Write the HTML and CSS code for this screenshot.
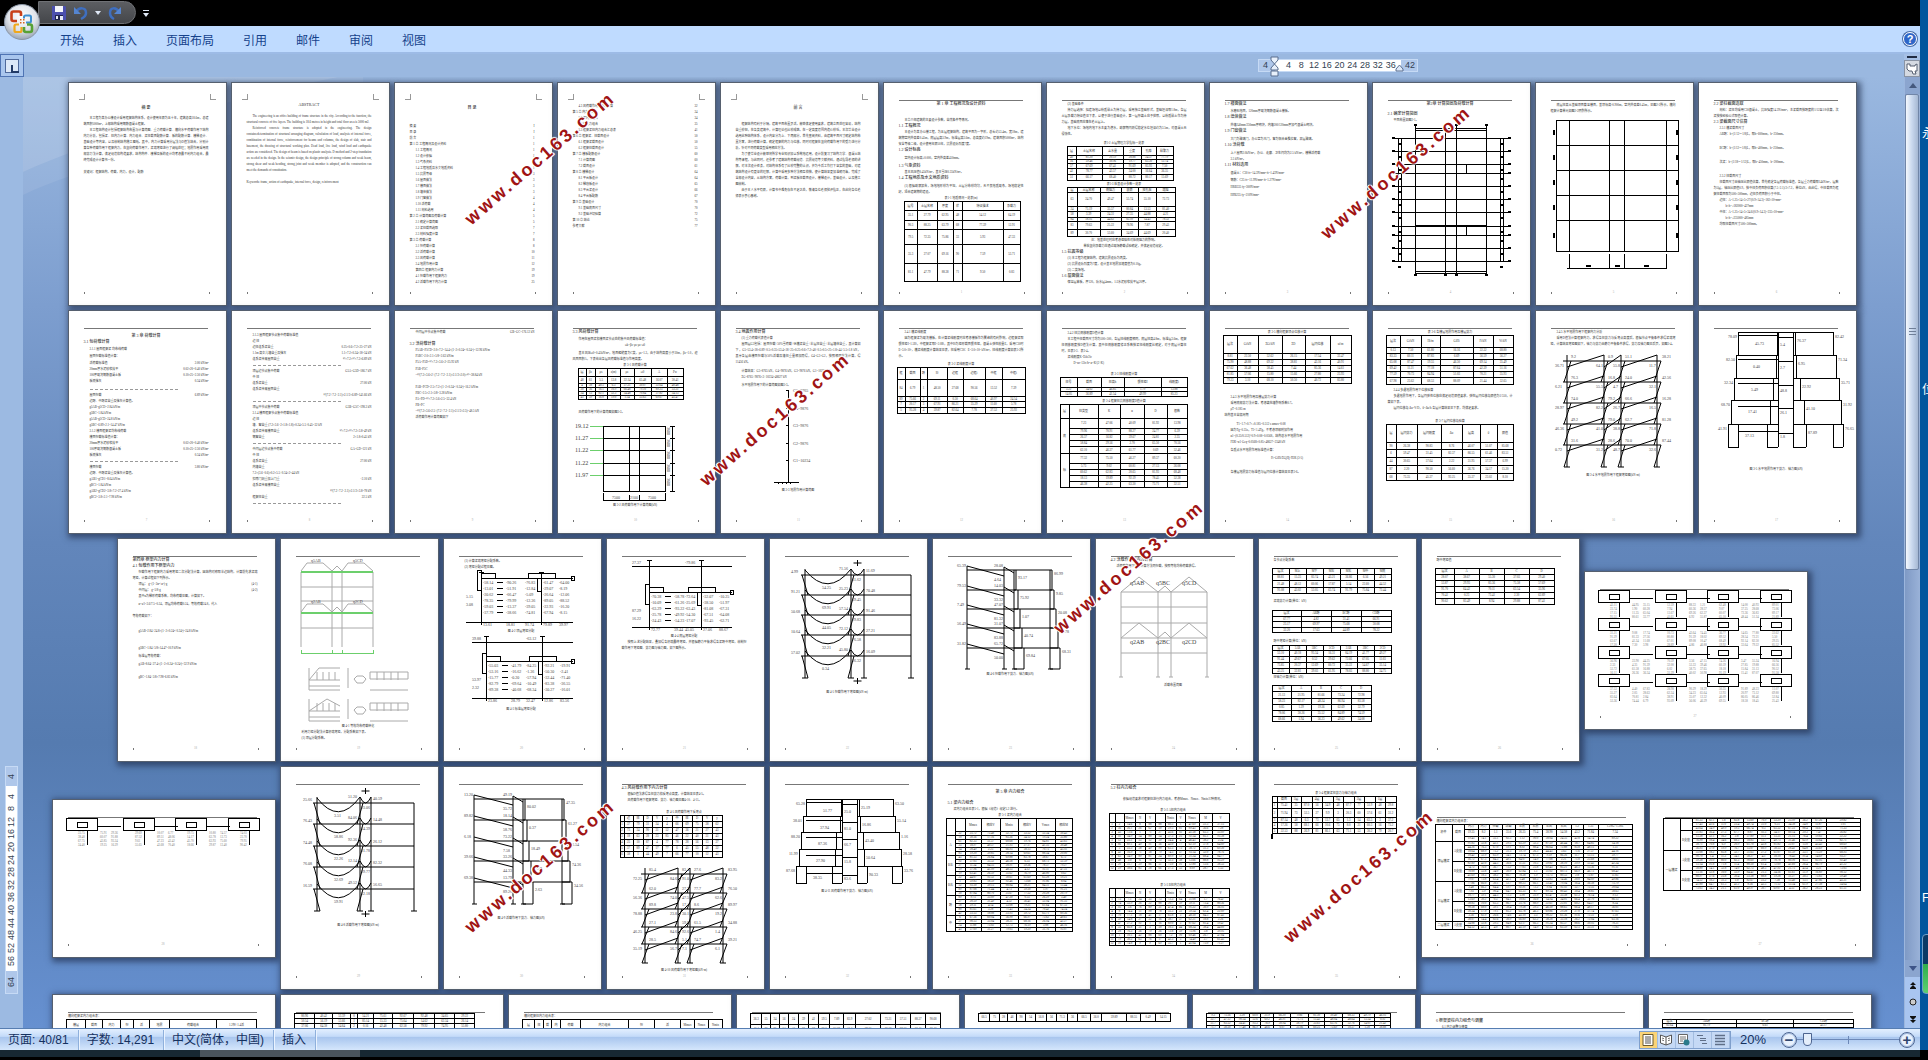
FILE: index.html
```html
<!DOCTYPE html>
<html lang="zh-CN">
<head>
    <meta charset="UTF-8">
    <meta name="viewport" content="width=device-width, initial-scale=1.0">
    <title>文档</title>
    <link rel="stylesheet" href="styles.css">
</head>
<body>
    <div class="word">
        <header class="titlebar">
            <button class="office" aria-label="Office">
                <svg viewBox="0 0 36 36" width="36" height="36">
                    <defs>
                        <radialGradient id="orb" cx="50%" cy="35%" r="65%">
                            <stop offset="0" stop-color="#fff"/>
                            <stop offset="0.6" stop-color="#dfe3ea"/>
                            <stop offset="1" stop-color="#9aa5b5"/>
                        </radialGradient>
                    </defs>
                    <circle cx="18" cy="18" r="17.5" fill="url(#orb)" stroke="#8a95a5"/>
                    <g fill="none" stroke-linejoin="round">
                        <path d="M13 17H9.500q-2 0-2-2V9.500q0-2 2-2H15q2 0 2 2V12" stroke="#c8401a" stroke-width="2.600"/>
                        <path d="M20 14.500v-1.500q0-1.500 1.500-1.500h4q1.500 0 1.500 1.500v4q0 1.500-1.500 1.500H22" stroke="#3f8fd0" stroke-width="2"/>
                        <path d="M15 20.500h-3q-1.500 0-1.500 1.500v4.500q0 1.500 1.500 1.500h4q1.500 0 1.500-1.500V23" stroke="#f0a81c" stroke-width="2.200"/>
                        <path d="M20 23v3q0 2 2 2h4q2 0 2-2v-3.500q0-2-2-2h-3" stroke="#57a135" stroke-width="2.600"/>
                    </g>
                    <path d="M16 15h1.500v1.500H16zM19 15h1.500v1.500H19zM16 18h1.500v1.500H16zM19 18h1.500v1.500H19z" fill="#d8641c"/>
                </svg>
            </button>
            <div class="quick">
                <button aria-label="保存">
                    <svg viewBox="0 0 16 16" width="16" height="16"><path d="M1 1h13l1 1v13H1z" fill="#4b4fae"/><path d="M4 1h8v6H4z" fill="#f3f5fb"/><path d="M4 10h8v5H4z" fill="#20244f"/><path d="M5 11h2v3H5zM9 11h3v4H9z" fill="#e6eaf6"/></svg>
                </button>
                <button aria-label="撤消">
                    <svg viewBox="0 0 16 16" width="16" height="16"><path d="M3 7C6 2 13 2 13 8c0 3-3 5-5 6" fill="none" stroke="#3f6fc0" stroke-width="2.500"/><path d="M1 2v7h7z" fill="#5585d0"/></svg>
                </button>
                <button class="drop" aria-label="撤消列表">
                    <svg viewBox="0 0 6 4" width="6" height="4"><path d="M0 0h6L3 4z" fill="#dfe8f5"/></svg>
                </button>
                <button aria-label="重复">
                    <svg viewBox="0 0 16 16" width="16" height="16"><path d="M12 7C9 2 3 2 3 8c0 3 2 5 4 6" fill="none" stroke="#3f6fc0" stroke-width="2.500"/><path d="M14 2v7H7z" fill="#5585d0"/></svg>
                </button>
            </div>
            <button class="more" aria-label="自定义快速访问工具栏">
                <svg viewBox="0 0 6 7" width="6" height="7"><path d="M0 0h6v1H0zM0 3h6L3 7z" fill="#dfe8f5"/></svg>
            </button>
        </header>

        <nav class="tabs">
            <a href="#">开始</a>
            <a href="#">插入</a>
            <a href="#">页面布局</a>
            <a href="#">引用</a>
            <a href="#">邮件</a>
            <a href="#">审阅</a>
            <a href="#">视图</a>
            <button class="help" aria-label="帮助">?</button>
        </nav>

        <div class="ruler-row">
            <button class="tabstop" aria-label="制表符"><span></span></button>
            <div class="ruler">
                <span class="edge">4</span>
                <span class="scale"><i>4</i><i>8</i><i>12</i><i>16</i><i>20</i><i>24</i><i>28</i><i>32</i><i>36</i></span>
                <span class="edge last">42</span>
                <svg class="mark left" viewBox="0 0 9 21" width="9" height="21"><path d="M1 1h7v3L4.500 8 1 4zM1 14v-2l3.500-4L8 12v2zM1 15h7v5H1z" fill="#e8f0fb" stroke="#5b6f8f"/></svg>
                <svg class="mark right" viewBox="0 0 9 8" width="9" height="8"><path d="M1 7V5l3.500-4L8 5v2z" fill="#dfe9f8" stroke="#5b6f8f"/></svg>
            </div>
            <div class="ruler-toggle">
                <button aria-label="标尺">
                    <svg viewBox="0 0 14 14" width="14" height="14"><path d="M2 2h3v2h5V3l2-1v7h-2l1 3H8L7 9H4L2 7z" fill="#fff" stroke="#555f70"/></svg>
                </button>
            </div>
        </div>

        <main class="work">
            <aside class="side">
                <div class="vruler">
                    <span class="edge">4</span>
                    <span class="scale"><i>4</i><i>8</i><i>12</i><i>16</i><i>20</i><i>24</i><i>28</i><i>32</i><i>36</i><i>40</i><i>44</i><i>48</i><i>52</i><i>56</i></span>
                    <span class="edge last">64</span>
                </div>
            </aside>

            <section class="canvas">
                <svg class="swoosh" viewBox="0 0 340 240" width="340" height="240">
                    <path d="M0 0H315C190 25 80 60 0 95z" fill="#fff" opacity="0.180"/>
                    <path d="M0 95C80 60 190 25 315 0H340V30C200 60 80 80 0 118z" fill="#fff" opacity="0.080"/>
                </svg>
                <div class="pages" id="pages"></div>
                <span class="stamp s1">www.doc163.com</span>
                <span class="stamp s2">www.doc163.com</span>
                <span class="stamp s3">www.doc163.com</span>
                <span class="stamp s4">www.doc163.com</span>
                <span class="stamp s5">www.doc163.com</span>
                <span class="stamp s6">www.doc163.com</span>
            </section>

            <div class="scroll">
                <button class="arrow" aria-label="向上"><svg viewBox="0 0 8 5" width="8" height="5"><path d="M0 5h8L4 0z" fill="#45597e"/></svg></button>
                <div class="track"><div class="thumb"></div></div>
                <button class="arrow" aria-label="向下"><svg viewBox="0 0 8 5" width="8" height="5"><path d="M0 0h8L4 5z" fill="#3d5488"/></svg></button>
                <div class="browse">
                    <button aria-label="前一页"><svg viewBox="0 0 6 7" width="6" height="7"><path d="M0 3h6L3 0zM0 6h6L3 3zM0 6h6v1H0z" fill="#111"/></svg></button>
                    <button aria-label="选择浏览对象"><svg viewBox="0 0 8 8" width="8" height="8"><circle cx="4" cy="4" r="3" fill="#ccc" stroke="#222"/></svg></button>
                    <button aria-label="下一页"><svg viewBox="0 0 6 7" width="6" height="7"><path d="M0 0h6v1H0zM0 1h6L3 4zM0 4h6L3 7z" fill="#111"/></svg></button>
                </div>
            </div>
        </main>

        <footer class="status">
            <span class="cell">页面: 40/81</span>
            <span class="cell">字数: 14,291</span>
            <span class="cell">中文(简体，中国)</span>
            <span class="cell">插入</span>
            <div class="views">
                <button class="on" aria-label="页面视图"><svg viewBox="0 0 12 12" width="12" height="12"><path d="M1 .500h10v11H1z" fill="#fff" stroke="#6b5a30"/><path d="M3 3h6M3 5h6M3 7h6M3 9h6" stroke="#555"/></svg></button>
                <button aria-label="阅读版式"><svg viewBox="0 0 12 12" width="12" height="12"><path d="M.500 1 6 3l5.500-2v8L6 11 .500 9zM6 3v8" fill="#fff" stroke="#555"/><path d="M2 4l2 .700M2 6l2 .700M8 4.700 10 4M8 6.700 10 6" stroke="#777"/></svg></button>
                <button aria-label="Web 版式"><svg viewBox="0 0 12 12" width="12" height="12"><path d="M.500.500h9v9h-9z" fill="#fff" stroke="#666"/><path d="M2 3h6M2 5h6M2 7h3" stroke="#777"/><circle cx="8.500" cy="8.500" r="3" fill="#2a7a8a"/></svg></button>
                <button aria-label="大纲视图"><svg viewBox="0 0 12 12" width="12" height="12"><path d="M1 1.500h6M4 4.500h6M4 6.500h6M6 9.500h5" stroke="#5f6f88"/></svg></button>
                <button aria-label="普通视图"><svg viewBox="0 0 12 12" width="12" height="12"><path d="M1 1.500h10M1 4.500h10M1 7.500h10M1 10.500h10" stroke="#5f6f88" stroke-width="1.500"/></svg></button>
            </div>
            <span class="percent">20%</span>
            <button class="round" aria-label="缩小">−</button>
            <input class="zoom" type="range" min="0" max="100" value="6" aria-label="显示比例">
            <button class="round" aria-label="放大">+</button>
        </footer>
        <div class="taskbar"><span></span></div>
    </div>

    <aside class="desktop">
        <span class="icon a">永</span>
        <span class="icon b">位</span>
        <span class="icon c">Fl</span>
        <div class="meter"></div>
    </aside>

    <script src="pages.js"></script>
</body>
</html>
```

FILE: styles.css
```css
* {
    margin: 0;
    padding: 0;
    box-sizing: border-box;
}

body {
    display: flex;
    height: 100vh;
    overflow: hidden;
    background: #000;
    font-family: "Liberation Sans", "Noto Sans CJK SC", sans-serif;
    font-size: 12px;
}

button {
    display: flex;
    align-items: center;
    justify-content: center;
    background: none;
    border: none;
    font-family: inherit;
}

.word {
    flex: 1;
    min-width: 0;
    display: flex;
    flex-direction: column;
}

/* title bar */
.titlebar {
    display: flex;
    height: 26px;
    background: #000;
}

.office {
    width: 36px;
    height: 36px;
    margin: 4px 0 0 4px;
    position: relative;
    z-index: 3;
}

.quick {
    display: flex;
    align-items: center;
    gap: 6px;
    height: 23px;
    margin: 1px 0 0 -2px;
    padding: 0 12px;
    background: linear-gradient(#5c5e62, #44464a);
    border: 1px solid #6f7175;
    border-radius: 0 12px 12px 0;
}

.quick .drop {
    width: 6px;
}

.more {
    width: 20px;
}

/* ribbon tabs */
.tabs {
    display: flex;
    align-items: center;
    gap: 29px;
    height: 28px;
    padding: 0 3px 0 60px;
    background: #bfdbff;
    border-bottom: 2px solid #9dbbe6;
}

.tabs a {
    color: #15428b;
    text-decoration: none;
}

.help {
    width: 14px;
    height: 14px;
    margin-left: auto;
    border: 1px solid #fff;
    border-radius: 50%;
    background: #2f66c8;
    box-shadow: 0 0 0 1px #4a6ea8;
    color: #fff;
    font-size: 11px;
    font-weight: bold;
}

/* horizontal ruler */
.ruler-row {
    display: flex;
    align-items: center;
    height: 23px;
    background: #9ab8e0;
}

.tabstop {
    width: 24px;
    height: 23px;
    border: 1px solid #4f74b4;
    background: #a9c6ee;
}

.tabstop span {
    width: 14px;
    height: 14px;
    padding: 5px 3px 2px 5px;
    border: 1px solid #4f6a9c;
    background: #dce8f8;
}

.tabstop span::after {
    content: "";
    display: block;
    width: 6px;
    height: 6px;
    border: solid #223a66;
    border-width: 0 0 2px 2px;
}

.ruler {
    display: flex;
    width: 160px;
    height: 13px;
    margin-left: auto;
    margin-right: 486px;
    position: relative;
    border: 1px solid #c6daf5;
    background: #afc7ea;
    color: #333f52;
    font-size: 9px;
    line-height: 11px;
}

.ruler i,
.vruler i {
    flex: 1;
    font-style: normal;
    text-align: center;
}

.ruler .edge {
    width: 16px;
    padding-left: 4px;
}

.ruler .last {
    padding-left: 4px;
}

.ruler .scale {
    display: flex;
    flex: 1;
    padding: 0 4px 0 7px;
    background: #fff;
}

.mark {
    position: absolute;
}

.mark.left {
    left: 11px;
    top: -4px;
}

.mark.right {
    left: 136px;
    top: 4px;
}

.ruler-toggle {
    width: 16px;
    height: 23px;
    padding-top: 2px;
    background: #a5c0e6;
}

.ruler-toggle::before {
    content: "";
    display: block;
    width: 10px;
    height: 2px;
    margin: 0 auto 2px;
    background: #1f2c44;
}

.ruler-toggle button {
    width: 16px;
    height: 17px;
    border: 1px solid #8a94a4;
    background: #d5dae2;
}

/* work area */
.work {
    display: flex;
    flex: 1;
    min-height: 0;
}

.side {
    display: flex;
    align-items: flex-end;
    justify-content: center;
    width: 23px;
    padding-bottom: 34px;
    background: #9cbae2;
}

.vruler {
    display: flex;
    flex-direction: row-reverse;
    width: 13px;
    height: 228px;
    border: 1px solid #c6daf5;
    background: #afc7ea;
    color: #333f52;
    font-size: 9px;
    line-height: 11px;
    writing-mode: vertical-rl;
    transform: rotate(180deg);
}

.vruler .edge {
    height: 19px;
    text-align: center;
}

.vruler .last {
    height: 22px;
}

.vruler .scale {
    display: flex;
    flex: 1;
    flex-direction: row-reverse;
    padding: 4px 0;
    background: #fff;
}

.canvas {
    flex: 1;
    min-width: 0;
    position: relative;
    overflow: hidden;
    background: linear-gradient(#9ab8e0 0%, #7d9ecf 24%, #6286bb 49%, #557bb0 70%, #6690d0 100%);
}

.swoosh {
    position: absolute;
    left: 0;
    top: 0;
}

.pages {
    display: flex;
    flex-wrap: wrap;
    justify-content: center;
    align-items: center;
    gap: 4px;
    padding: 5px 3px 0 0;
    position: relative;
}

/* one sheet at 20% */
.page {
    display: flex;
    flex-direction: column;
    width: 159px;
    height: 224px;
    overflow: hidden;
    background: #fff;
    border: 1px solid #56606f;
    box-shadow: 2px 2px 6px 2px rgba(30, 45, 75, 0.65);
    color: #333;
    font-family: "Liberation Serif", "Noto Sans CJK SC", serif;
    font-size: 3px;
    line-height: 6px;
}

.page.wide {
    width: 224px;
    height: 159px;
}

.page .top {
    flex: none;
    height: 18px;
    margin: 0 18px 0 15px;
    border-bottom: 1px solid #777;
}

.page.front .top {
    display: flex;
    justify-content: space-between;
    height: 16px;
    margin: 0 10px 2px;
    padding-top: 11px;
    border: none;
}

.page.front .top::before,
.page.front .top::after {
    content: "";
    width: 5px;
    height: 5px;
    border-bottom: 1px solid #999;
}

.page.front .top::before {
    border-right: 1px solid #999;
}

.page.front .top::after {
    border-left: 1px solid #999;
}

.page .body {
    flex: 1;
    min-height: 0;
}

.page .foot {
    flex: none;
    height: 2px;
    margin: 0 16px 11px 15px;
    border: solid #777;
    border-width: 0 1px;
    color: #aaa;
    line-height: 0;
    text-align: center;
}

.page p {
    min-height: 6px;
    margin: 0 17px 0 15px;
    white-space: nowrap;
}

.page .in {
    padding-left: 6px;
}

.page .in2 {
    padding-left: 12px;
}

.page .full {
    padding-left: 0;
    white-space: normal;
    text-align: justify;
}

.page .full.in {
    text-indent: 6px;
}

.page .sec {
    font-size: 4px;
    font-weight: 500;
}

.page .title,
.page .cap {
    text-align: center;
}

.page .title {
    font-size: 4px;
    font-weight: 500;
}

.page .pair {
    display: flex;
    justify-content: space-between;
}

.page .rule {
    height: 4px;
    min-height: 0;
    margin: 0 48px 2px 21px;
    padding: 0;
    border-bottom: 1px dashed #999;
}

.page svg {
    display: block;
    overflow: visible;
    fill: none;
    stroke: #000;
    shape-rendering: crispEdges;
}

.page svg text {
    fill: #444;
    stroke: none;
    font-family: "Liberation Serif", serif;
    font-size: 4px;
}

.page svg .big {
    font-size: 6px;
}

.page svg .tiny {
    fill: #777;
    font-size: 3px;
}

.page svg .gray {
    stroke: #aaa;
}

.page svg .green {
    stroke: #6ccf6c;
}

.page svg .bold {
    stroke-width: 2;
}

.page svg .smooth {
    shape-rendering: auto;
}

.page table {
    table-layout: fixed;
    border-collapse: collapse;
    margin-left: 13px;
    font-size: 3px;
    line-height: 3px;
}

.page.indent table {
    margin-left: 20px;
}

.page td {
    border: 1px solid #000;
    text-align: center;
    white-space: nowrap;
}

/* watermark across the sheets */
.stamp {
    position: absolute;
    padding: 0 4px;
    color: #a01414;
    font-size: 18px;
    font-weight: bold;
    letter-spacing: 3px;
    line-height: 20px;
    text-shadow: 1px 0 1px #fff, -1px 0 1px #fff, 0 1px 1px #fff, 0 -1px 1px #fff, 1px 1px 0 #fff, -1px -1px 0 #fff;
    transform: translate(-50%, -50%) rotate(-41deg);
}

.s1 { left: 27.5%; top: 8.5%; }
.s2 { left: 73%; top: 10%; }
.s3 { left: 40%; top: 36%; }
.s4 { left: 58.8%; top: 51.5%; }
.s5 { left: 27.5%; top: 83%; }
.s6 { left: 71%; top: 84%; }

/* scroll bar */
.scroll {
    display: flex;
    flex-direction: column;
    width: 16px;
    background: #8ba5cf;
    border-left: 1px solid #9cb6dd;
}

.arrow {
    height: 17px;
}

.track {
    flex: 1;
    background: linear-gradient(90deg, #7f9ac5, #9ab2d8);
}

.thumb {
    width: 14px;
    height: 55%;
    border: 1px solid #7186a8;
    border-radius: 2px;
    background:
        repeating-linear-gradient(#6f7f98 0 1px, transparent 1px 3px) center / 7px 9px no-repeat,
        linear-gradient(90deg, #f4f8fd, #c9d8ee 50%, #a6b8d3);
}

.browse {
    display: flex;
    flex-direction: column;
    justify-content: space-around;
    height: 51px;
    background: #a9c5f0;
}

/* status bar */
.status {
    display: flex;
    align-items: center;
    height: 22px;
    border-top: 1px solid #567db1;
    background: linear-gradient(#e3efff 0%, #c4dbf9 35%, #a9c6ee 40%, #d5e6fc 100%);
    color: #15315f;
}

.cell {
    padding: 0 9px 0 8px;
    border-right: 1px solid #8fb0dc;
    box-shadow: 1px 0 0 #eaf3ff;
    line-height: 20px;
}

.views {
    display: flex;
    margin-left: auto;
    border: 1px solid #7f9fcc;
    background: #c5d9f5;
}

.views button {
    width: 18px;
    height: 16px;
    border-right: 1px solid #a3bde0;
}

.views .on {
    background: #fbd477;
}

.percent {
    padding: 0 15px 0 9px;
    font-size: 13px;
}

.round {
    width: 16px;
    height: 16px;
    border: 1px solid #4d6591;
    border-radius: 50%;
    background: #e8f1fd;
    box-shadow: inset 0 0 0 1px #a5bde0;
    color: #31466e;
    font-size: 15px;
    font-weight: bold;
    line-height: 14px;
}

.round:last-child {
    margin-right: 5px;
}

.zoom {
    width: 102px;
    height: 14px;
    appearance: none;
    background:
        linear-gradient(#6c88b8, #6c88b8) center / 1px 8px no-repeat,
        linear-gradient(#6c88b8, #6c88b8) center / 100% 1px no-repeat;
}

.zoom::-webkit-slider-thumb {
    appearance: none;
    width: 9px;
    height: 13px;
    border: 1px solid #4d6591;
    border-radius: 1px 1px 5px 5px;
    background: #e4eefb;
}

.taskbar {
    height: 10px;
    padding-left: 200px;
    background: #172833;
    border-bottom: 3px solid #000;
}

.taskbar span {
    display: block;
    width: 160px;
    height: 7px;
    background: #4a545d;
}

/* strip of desktop beside the window */
.desktop {
    width: 8px;
    margin-bottom: 10px;
    position: relative;
    overflow: hidden;
    background: #01559d;
    color: #fff;
}

.icon {
    position: absolute;
    left: 2px;
}

.icon.a { top: 124px; }
.icon.b { top: 380px; }
.icon.c { top: 891px; }

.meter {
    position: absolute;
    left: 2px;
    top: 934px;
    width: 20px;
    height: 60px;
    border: 1px solid #6f9fc8;
    border-radius: 4px;
    background: linear-gradient(#0a3a66 50%, #2fae4c 50%, #5cd070);
}
```

FILE: pages.js
```javascript
// Sheet contents. A string is one text line, a number is a gap in pixels.
// Line marks: '# ' title, '= ' section, '^ ' caption, '> ' paragraph,
// '| ' goes on with the paragraph above, '. ' indented, '; ' double indent, '--' dashed rule.
// A tab inside a line pushes the rest to the right edge.
const marks = {
    '#': 'title', '=': 'sec', '^': 'cap', '>': 'full in', '|': 'full', '.': 'in', ';': 'in2'
};

let seed = 3;
function num(digits = 2) {
    seed = (seed * 7919 + 13) % 10007;
    return (seed / 107).toFixed(digits);
}

function line(s) {
    if (s === '') return '<p></p>';
    if (s === '--') return '<p class="rule"></p>';
    const cls = marks[s[0]] && s[1] === ' ' ? marks[s[0]] : '';
    const text = cls ? s.slice(2) : s;
    if (text.includes('\t')) {
        return `<p class="pair ${cls}">` + text.split('\t').map(t => `<span>${t}</span>`).join('') + '</p>';
    }
    return `<p class="${cls}">${text}</p>`;
}

// glue '| ' lines to the paragraph before them
function join(body) {
    return body.reduce((out, b) => {
        const last = out[out.length - 1];
        if (typeof b === 'string' && b.startsWith('| ') && typeof last === 'string' && /^[>|] /.test(last)) {
            out[out.length - 1] = last + (/[a-z,.]$/.test(last) ? ' ' : '') + b.slice(2);
        } else {
            out.push(b);
        }
        return out;
    }, []);
}

// cols and rows are sizes in pixels, head holds the first row,
// lead lists the row spans of the left columns
function table(cols, rows, head = [], lead = []) {
    const width = cols.reduce((a, b) => a + b, 0);
    const starts = lead.map(spans => {
        const map = {};
        let at = 0;
        spans.forEach(([n, label]) => { map[at] = [n, label]; at += n; });
        return map;
    });
    let html = `<table style="width:${width}px"><colgroup>`;
    cols.forEach(c => { html += `<col style="width:${c}px">`; });
    html += '</colgroup><tbody>';
    rows.forEach((h, r) => {
        html += `<tr style="height:${h}px">`;
        cols.forEach((c, i) => {
            if (i < starts.length) {
                const s = starts[i][r];
                if (s) html += `<td rowspan="${s[0]}">${s[1]}</td>`;
                return;
            }
            const text = r === 0 && head[i] !== undefined ? head[i] : c < 8 ? r : num(c < 11 ? 0 : c < 14 ? 1 : 2);
            html += `<td>${text}</td>`;
        });
        html += '</tr>';
    });
    return html + '</tbody></table>';
}

function fig(h, inner) {
    return `<svg viewBox="0 0 157 ${h}" width="157" height="${h}">${inner}</svg>`;
}

const path = (d, cls = '') => `<path class="${cls}" d="${d}"/>`;
const label = (x, y, t, cls = '') => `<text class="${cls}" x="${x}" y="${y}">${t}</text>`;
const rep = (n, v) => Array(n).fill(v);

// moment diagram under horizontal load
function sway(xs, ys, bottom) {
    let d = '', t = '';
    const right = xs[3];
    xs.forEach(x => { d += `M${x} ${ys[0] - 6}V${bottom}M${x - 3} ${bottom}h6`; });
    ys.forEach((y, k) => {
        const next = ys[k + 1] || bottom;
        d += `M${xs[0] - 4} ${y}H${right + 4}`;
        for (let i = 0; i < 3; i++) {
            d += `M${xs[i]} ${y + 6}L${xs[i + 1]} ${y - 6}`;
            t += label(xs[i] + 4, y - 3, num(1)) + label(xs[i + 1] - 8, y + 6, num(1));
        }
        xs.forEach(x => { d += `M${x + 4} ${y}L${x - 3} ${next}`; });
        t += label(xs[0] - 12, y + 6, num()) + label(right + 5, y - 3, num());
    });
    return path(d, 'smooth') + t;
}

// moment diagram under vertical load
function sag(xs, ys, bottom) {
    let d = '', t = '';
    xs.forEach(x => { d += `M${x} ${ys[0] - (x === xs[3] ? 0 : 6)}V${bottom}M${x - 3} ${bottom}h6`; });
    ys.forEach((y, k) => {
        const next = ys[k + 1] || bottom;
        d += `M${xs[0] - 4} ${y}H${xs[3]}`;
        d += `M${xs[0]} ${y - 5}Q${(xs[0] + xs[1]) / 2} ${y + 23} ${xs[1]} ${y - 6}`;
        d += `M${xs[1]} ${y - 6}Q${(xs[1] + xs[2]) / 2} ${y + 6} ${xs[2]} ${y - 6}`;
        d += `M${xs[0] - 3} ${y}L${xs[0] + 3} ${next}M${xs[1] + 3} ${y}L${xs[1] - 3} ${next}`;
        t += label(xs[0] - 14, y - 2, num()) + label(xs[0] + 17, y + 14, num()) + label(xs[1] - 12, y - 5, num());
        t += label(xs[1] + 1, y + 6, num()) + label(xs[2] + 2, y - 3, num());
    });
    const mid = (xs[1] + xs[2]) / 2;
    d += `M${mid - 4} ${ys[0] - 12}h8M${mid} ${ys[0] - 15}v6M${mid - 4} ${bottom + 3}h8M${mid} ${bottom}v6`;
    return path(d, 'smooth') + t;
}

// shear and axial force diagram under vertical load
function shear(x0, x1, x2, x3, ys, bottom) {
    let d = `M${x0} ${ys[0] - 4}V${bottom}M${x1} ${ys[0] - 3}V${bottom}M${x2} ${ys[0]}V${bottom}M${x3} ${ys[0]}V${bottom}`;
    let t = '';
    [x0, x1, x2, x3].forEach(x => { d += `M${x - 2} ${bottom}h5`; });
    ys.forEach((y, k) => {
        const next = ys[k + 1] || bottom, a = 2 + k * 2;
        d += `M${x0} ${y}H${x3 + a}V${next}M${x2 + a} ${y}V${next}M${x2} ${next}h${a}M${x3} ${next}h${a}`;
        d += `M${x0} ${y - 4}L${x1} ${y + 6}M${x1} ${y - 3}L${x2} ${y + 3}`;
        t += label(x0 - 10, y - 3, num()) + label(x1 - 10, y + 11, num()) + label(x1 - 10, y - 3, num());
        t += label(x2 + a + 2, y + 9, num()) + label(x3 + a + 2, y + 5, num());
    });
    return path(d, 'smooth') + t;
}

// stepped axial force diagram
function steps(ys, outer, inner, mid) {
    let d = `M${mid[0]} ${ys[0]}V${ys[5]}M${mid[1]} ${ys[0]}V${ys[5]}M${outer[0][0]} ${ys[0]}H${outer[0][1]}`;
    let t = '';
    for (let k = 0; k < 5; k++) {
        const [l, r] = outer[k], [a, b] = inner[k], y = ys[k], e = ys[k + 1];
        d += `M${l} ${y}V${e}M${r} ${y}V${e}M${a} ${y}V${e}M${b} ${y}V${e}M${l} ${y}H${mid[0]}M${mid[1]} ${y}H${r}`;
        d += `M${outer[0][0]} ${y + 3 + k}H${mid[0]}M${mid[0]} ${y + 5 + k}H${mid[1]}`;
        t += label(l - 10, y + 6, num()) + label(l + 17, y + 13, num()) + label(mid[0] + 2, y + 14, num(1));
        t += label(b + 2, y + 10, num()) + label(r + 2, y + 6, num());
    }
    const e = ys[5], l = outer[4][0], r = outer[4][1];
    d += `M${l} ${e}h10V${ys[4]}M${r} ${e}h-10V${ys[4]}M${inner[4][0]} ${e}H${mid[0]}M${mid[1]} ${e}H${inner[4][1]}`;
    return path(d) + t;
}

// moment distribution sheet
function spread(x1, x2, left, right, top, beam, bottom) {
    let d = `M${x1} ${top}V${bottom + 3}M${x2} ${top}V${bottom + 3}M${x1} ${beam}H${right}M${left} ${bottom}H${right}`;
    d += `M${x1 - 2} ${top}h5M${x2 - 2} ${top}h5M${x1} ${beam - 5}h14v5M${x2 - 13} ${beam}v-5h27v5`;
    d += `M${x1 - 4} ${beam - 8}h4v20h-4zM${x2 - 4} ${beam}h4v13h-4zM${right - 2} ${beam - 2}h3v4h-3z`;
    let t = '';
    const cols = [x1 + 2, x1 + 25, x2 - 16, x2 + 2, x2 + 18];
    for (let y = beam + 6; y < bottom - 2; y += 6) {
        cols.forEach(x => { t += label(x, y, '-' + num()); });
        d += `M${x1 + 16} ${y - 2}h6`;
    }
    [beam + 20, beam + 28].forEach(y => { t += label(left, y, num()); });
    cols.forEach(x => { t += label(x, bottom + 4, num()); });
    if (beam - top > 15) {
        d += `M${left} ${top + 6}H${right}`;
        t += label(left, top + 4, num()) + label(x2 - 16, top + 4, '-' + num());
    }
    return path(d) + t;
}

// row of joint boxes on the wide sheets
function joints(y) {
    let d = '', t = '';
    [13, 70, 122, 175].forEach((x, i) => {
        d += `M${x} ${y}h31v12h-31zM${x + 11} ${y + 4}h10v5h-10zM${x + 21} ${y + 12}v15`;
        if (i < 3) d += `M${x + 31} ${y + 8}h24`;
        for (let k = 0; k < 4; k++) {
            [12, 34, 45].forEach(o => { if (x + o < 205) t += label(x + o, y + 16 + k * 4, num(), 'tiny'); });
        }
    });
    return path(d) + t;
}

function plan() {
    let d = 'M42 0V152M72 0V152M83 0V152M113 0V152M25 14V137M28 14V137M127 14V137M130 14V137M42 4H113M42 6H113M42 147H113M42 149H113M93 40v9M93 102v9';
    let dots = '';
    [14, 27, 40, 49, 62, 75, 88, 102, 111, 124, 137].forEach(y => {
        d += `M20 ${y}H136`;
        dots += `M19 ${y}h3M135 ${y}h3M25 ${y + 6}h3M127 ${y + 6}h3`;
    });
    [42, 72, 83, 113].forEach(x => { dots += `M${x - 1} 1h3M${x - 1} 151h3`; });
    return path(d) + path(dots + 'M42 102H113', 'bold');
}

function slab() {
    let d = 'M20 0H142V131H20zM33 0V131M73 0V131M88 0V131M130 0V131M33 134v14M73 134v14M88 134v14M130 134v14M31 148H131';
    [25, 50, 75, 100].forEach(y => { d += `M20 ${y}H142`; });
    return path(d) + path('M18 10v5M18 35v5M18 60v5M18 85v5M18 113v5M141 10v5M141 35v5M141 60v5M141 85v5M141 113v5M50 146h5M79 146h5M108 146h5', 'bold');
}

function load() {
    const d = 'M45 2H107V67H45zM71 2V67M81 2V67M45 14H107M45 26H107M45 39H107M45 51H107M45 69v7H107v-7M71 71v5M81 71v5M114 2V67M112 2h5M112 14h5M112 26h5M112 39h5M112 51h5M112 67h5';
    let g = '', t = '';
    ['19.12', '11.27', '11.22', '11.22', '11.97'].forEach((v, i) => {
        const y = [2, 14, 26, 39, 51][i];
        g += `M32 ${y}H45`;
        t += label(17, y + 2, v, 'big');
    });
    [3, 15, 27, 40, 54].forEach(y => { t += `<text transform="translate(109 ${y}) rotate(90)">3600</text>`; });
    return path(d) + path(g, 'green') + t + label(54, 75, '7500') + label(72, 75, '2100') + label(90, 75, '7500');
}

function loads() {
    let d = 'M20 11V86M51 11V86M61 11V86M92 11V86M20 26H92M20 40H92M20 67H92';
    d += 'M20 10l6-8h16l9 8M51 10l5-5 5 5 6-8h16l9 8M20 51l6-8h16l9 8M51 51l5-5 5 5 6-8h16l9 8';
    [107, 138].forEach((y, i) => {
        d += `M28 ${y + 12}h31M28 ${y + 18}h31M28 ${y}v22M28 ${y + 22}h31M67 ${y}v20M89 ${y + 4}h38v7h-38zM89 ${y + 22}h38M73 ${y + 11}l3-3h6l3 3-3 4h-6z`;
        d += i ? `M28 ${y + 12}l18-12 13 7` : `M28 ${y + 12}l10-12h21`;
        [36, 42, 48, 54, 96, 103, 110, 117].forEach(x => { d += `M${x} ${y + 4}v8`; });
    });
    const beams = path('M20 11H92M20 52H92', 'green bold') + path('M20 92H92M20 89v4M51 89v4M61 89v4M92 89v4', 'green');
    return path(d, 'gray smooth') + beams + label(30, 1, 'q5AB') + label(72, 1, 'q5CD') + label(30, 42, 'q2AB') + label(72, 42, 'q2CD');
}

function roofLoads() {
    let d = '';
    [25, 62, 75, 111].forEach(x => { d += `M${x} 16V101M${x - 2} 101h4`; });
    [16, 31, 47, 62, 77].forEach(y => { d += `M25 ${y}H111`; });
    [16, 62].forEach(y => { d += `M25 ${y}l18-15 19 15 7-6 6 6 18-15 18 15`; });
    return path(d, 'gray smooth') + label(34, 9, 'q5AB', 'big') + label(60, 9, 'q5BC', 'big') + label(86, 9, 'q5CD', 'big')
        + label(34, 68, 'q2AB', 'big') + label(60, 68, 'q2BC', 'big') + label(86, 68, 'q2CD', 'big');
}

const calc = ['. 活荷载标准值\t2.00 kN/m²', '. 20mm厚水泥砂浆找平\t0.02×20=0.40 kN/m²', '. 100厚现浇钢筋混凝土板\t0.10×25=2.50 kN/m²', '. 板底抹灰\t0.34 kN/m²'];
const wideCols = [17, 12, 14, 11, 13, 13, 14, 13, 14, 15, 12, 15, 34];
const wideHead = ['层次', '截面', '内力', '内力', '恒载', '活载', '左震', '右震', '左风', '右风', '1.2', '1.35', '1.2SG+1.3SE'];

const pages = [
    { front: 1, body: [4, '# 摘  要', 4,
        '> 本工程为某办公楼设计采用框架结构体系，设计使用年限为五十年，建筑总高18.6m，总建筑面积5000m²，',
        '| 上部结构采用钢筋混凝土框架。',
        '> 本工程结构设计包括框架结构布置与计算简图、重力荷载计算、横向水平荷载作用下结构内力分析，',
        '| 包括梁、柱内力计算、内力组合、梁柱截面配筋计算、板的配筋计算、楼梯设计、基础设计等内容，以及',
        '| 绘制结构施工图纸。其中，内力计算采用分层法与D值法结合，分别计算各种荷载作用下框架内力，',
        '| 在竖向荷载作用下，梁端弯矩进行了调幅处理；地震作用采用底部剪力法计算，满足规范和构造要求，',
        '| 结构构件、楼梯及板的设计均考虑最不利内力组合，最终完成设计计算书一份。', '', '关键词：框架结构，荷载，内力，设计，配筋'] },
    { front: 1, body: [1, '# ABSTRACT', 5,
        '> The engineering is an office building of frame structure in the city. According to the function,',
        '| the structural concrete of five layers. The building is 18.6 metres in height and total floor area',
        '| is 5000 m2.',
        '> Reinforced concrete frame structure is adopted in the engineering. The design contains:',
        '| determination of structural arranging diagram, calculation of load, analysis of internal force,',
        '| combination of internal force, reinforcement for beams and columns, the design of',
        '| slab, stair and basement, the drawing of structural working plan. Dead load, live load, wind load',
        '| and earthquake action are considered. The design of beam is based on plastic analysis. D method',
        '| and 2-step foundation are needed in the design. In the seismic design, the design principle of',
        '| strong column and weak beam, strong shear and weak bending, strong joint and weak member is',
        '| adopted, and the construction can meet the demands of constitution.', '',
        'Keywords: frame, action of earthquake, internal force, design, reinforcement'] },
    { front: 1, body: [4, '# 目  录', 12, '摘  要\tI', '目  录\tI', '前  言\t1', '第 1 章  工程概况及设计资料\t1', '. 1.1 工程概况\t1', '. 1.2 设计依据\t1', '. 1.3 气象资料\t1',
        '. 1.4 工程地质及水文地质资料\t1', '. 1.5 抗震等级\t3', '. 1.6 屋面做法\t3', '. 1.7 楼面做法\t3', '. 1.8 墙体做法\t3', '. 1.9 门窗做法\t4', '. 1.10 活荷载\t4', '. 1.11 材料选用\t4',
        '第 2 章  计算简图及荷载计算\t5', '. 2.1 确定计算简图\t5', '. 2.2 梁柱截面选取\t7', '. 2.3 材料强度计算\t7', '第 3 章  荷载计算\t8', '. 3.1 恒荷载计算\t8', '. 3.2 活荷载计算\t10', '. 3.3 风荷载计算\t11', '. 3.4 地震作用计算\t12',
        '. 第四章 框架内力计算\t19', '. 4.1 恒载作用下框架内力\t19', '. 4.2 活载作用下内力计算\t25'] },
    { front: 1, body: [2, '. 4.3 风荷载作用下内力计算\t32', '第 5 章  内力组合\t34', '. 5.1 梁内力组合\t34', '. 5.2 柱内力组合\t35', '. 5.3 框架梁柱内力组合汇总表\t41', '第 6 章  框架梁、柱截面设计\t50', '. 6.1 框架梁截面设计\t50', '. 6.2 框架柱截面设计\t55', '第 7 章  楼板配筋设计\t60', '. 7.1 计算简图\t60', '. 7.2 截面设计\t61', '第 8 章  楼梯设计\t64', '. 8.1 平台板设计\t64', '. 8.2 梯段板设计\t65', '. 8.3 平台梁设计\t66', '. 8.4 平台板配筋\t67', '第 9 章  基础设计\t70', '. 9.1 基础底面尺寸\t70', '. 9.2 基础冲切验算\t72', '第 10 章  结论\t75', '参考文献\t77'] },
    { front: 1, body: [4, '# 前  言', 10,
        '> 框架结构有利于分隔，建筑平面布置灵活，能够满足使用要求，建筑立面处理容易，结构自重较轻，',
        '| 在各类建筑中，计算理论也比较成熟，在一定高度范围内造价较低，本次毕业设计选用此种结构体系，',
        '| 设计内容分为上、下两部分，首先查阅资料，由建筑平面尺寸确定结构布置方案，进行荷载计算，确',
        '| 定框架的内力与位移，同时对框架在竖向荷载作用下的受力进行分析，针对不同荷载类型采用相应方法。',
        '> 为了使毕业设计能够将所学专业知识加以系统地运用，设计前复习了结构力学、混凝土结构等课程，',
        '| 与此同时，还参考了建筑结构荷载规范、抗震规范等文献资料，通过指导老师的讲解，对本次设计任',
        '| 务，对结构体系有了比较完整的认识，并为今后工作打下坚实的基础，对建筑结构设计有更深的理解，',
        '| 计算中采用多种方法相互校核，使计算结果更加准确可靠，完成了全部设计内容，从结构方案，荷载计算，到梁板柱截面设计，楼梯设计，基础设计，以及施工图绘制。',
        '> 由于本人水平有限，计算书中难免存在不足之处，敬请各位老师批评指正，在此向各位老师表示衷心感谢。'] },
    { indent: 1, body: ['# 第 1 章  工程概况及设计资料', 10, '. 本章介绍建筑的主要设计参数，自然条件等情况。', '= 1.1 工程概况',
        '> 本设计为某办公楼工程，为五层框架结构，建筑平面为一字形，总长约53.4m，宽18m，建筑物室内',
        '| 外高差0.45m，底层层高3.9m，标准层高3.6m，总高度约19m，建筑面积5000m²，结构安全等',
        '| 级二级，设计使用年限50年，抗震设防烈度7度。', '= 1.2 设计标高', 2, '. 室内设计标高±0.000，室内外高差450mm。', 2, '= 1.3 气象资料', '. 基本风压值0.45kN/m²，基本雪压0.35kN/m²。', '= 1.4 工程地质及水文地质资料', 2,
        '> (1) 根据勘察报告，场地地形较为平坦，土层分布较均匀，无不良地质现象，场地稳定性好，适合建筑物的建设。', '^ 表1-1 地质情况一览表(m)',
        table([13, 20, 16, 9, 41, 17], [9, 10, 9, 15, 19, 18], ['层号', '土层名称', '厚度', '状', '特征描述', '承载力'])] },
    { indent: 1, body: ['. (2) 基础条件', '> 持力层选择：拟建场地以粉质粘土为持力层，采用独立基础形式，基础埋深取1.8m，各层土',
        '| 层承载力特征值见下表，以便于进行基础设计，第一层杂填土应予挖除，以粉质粘土作为持力层，基',
        '| 础底面应落在老土层上。', '> 地下水位：场地内地下水主要为潜水，勘察期间测得稳定水位埋深约为3.5m，对混凝土无侵蚀性。', 3, '^ 表1-2 土层物理力学指标一览表',
        table([9, 26, 21, 18, 15, 17], [9, 4, 4, 5, 6, 6], ['层', '土层名称', '含水量', '重度', '孔隙', '粘聚力']), '^ 表1-3 桩基设计参数一览表',
        table([10, 23, 21, 17, 18, 19], [5, 14, 5, 6, 4, 8, 7], ['层', '土层名称', '侧阻力', '极限', '挖孔桩', '端阻']), '^ 注：地基处理时应考虑湿陷性对桩侧阻力的影响。', '^ 单桩竖向承载力应通过现场静载试验确定，并满足规范规定。', '= 1.5 抗震等级',
        '. (1) 本工程为框架结构，建筑抗震设防为丙类。', '. (2) 抗震设防烈度为7度，设计基本地震加速度值为0.10g。', '. (3) 二类场地。', '= 1.6 屋面做法', '. 保温层苯板，厚120，防水层4mm，1:3水泥砂浆找平层20厚。'] },
    { body: ['= 1.7 楼面做法', 1, '. 水磨石地面，120mm厚现浇钢筋混凝土楼板。', '= 1.8 墙体做法', 2, '. 外墙240mm/250mm厚砌块，内墙200/120mm厚加气混凝土砌块。', '= 1.9 门窗做法', 2, '. 大门为玻璃门，办公室为木门，窗为铝合金推拉窗，双层玻璃。', '= 1.10 活荷载', 2, '. 上人屋面2.0kN/m²，办公、走廊、卫生间均为2.5 kN/m²，楼梯活荷载', '. 3.5 kN/m²。', '= 1.11 材料选用', 2, '. 混凝土：C30  fc=14.3N/mm²  ft=1.43N/mm²', 1, '. 钢筋：C25  fc=11.9N/mm²  ft=1.27N/mm²', 1, '. HRB335 fy=300N/mm²', 2, '. HPB235 fy=210N/mm²'] },
    { body: ['# 第2章  计算简图及荷载计算', 4, '= 2.1 确定计算简图', '. 平面布置如图2-1。', 1, fig(155, plan())] },
    { body: [1, '> 底层柱高从基础顶面算至楼面，基顶标高-0.900m，室内外高差0.45m，见图2-2所示，', '| 横向框架计算单元如图2-2阴影所示。', 6, fig(150, slab())] },
    { body: ['= 2.2 梁柱截面选取', '> 材料：梁柱均采用C30混凝土，抗压强度14.3N/mm²，主梁截面按跨度的1/12至1/8估算，次梁按', '| 按经验公式取值计算。', '= 2.3 梁截面尺寸估算', '. 2.3.1 横梁截面尺寸', '. AB跨：h=(1/12～1/8)L，取h=600mm，b=250mm。', 8, '. BC跨：h=(1/12～1/8)L，取h=400mm，b=250mm。', 8, '. 次梁：h=(1/18～1/12)L，取h=450mm，b=200mm。', 8, '. 2.3.2 柱截面尺寸', '> 柱截面尺寸由轴压比限值估算，首先确定各层荷载标准值，各层重力荷载取14kN/m²，层数为5',
        '| 层，轴压比限值0.9，按中柱负荷面积估算(7.5+2.1)/2×7.2，单位kN，由此得，中柱截面为',
        '| 框架柱截面取为500×500mm，边柱负荷面积小于中柱。', '. 边柱：A=1.25×14×5×27/(0.9×14.3)=182×10³mm²', '; b×h=√182000=427mm', '. 中柱：A=1.25×14×5×34.6/(0.9×14.3)=235×10³mm²', '; b×h=√235000=485mm', '. 均取柱截面尺寸500×500mm。'] },

    { body: [4, '# 第 3 章  荷载计算', '= 3.1 恒荷载计算', 1, '. 3.1.1 屋面框架梁 均布线荷载', 1, '. 屋面恒载标准值计算：', 1, ...calc, 2, '--', '. 屋面恒载\t6.89 kN/m²', '. 边跨、中跨梁自重及抹灰计算值。', '. g5AB=g5CD=2.84 kN/m', '. g5BC=1.84 kN/m', '. g5AB=g5CD=24.8 kN/m', '. g5BC=6.89×2.1=14.47 kN/m', '. 3.1.2 楼面框架梁均布线荷载', '. 楼面恒载标准值计算：', ...calc.slice(1), '--', '. 楼面恒载\t3.80 kN/m²', '. 边跨、中跨梁自重及抹灰计算值。', '. gAB1=gCD1=8.64 kN/m', '. gBC1=1.84 kN/m', '. gAB2=gCD2=3.8×7.2=27.4 kN/m', '. gBC2=3.8×2.1=7.98 kN/m'] },
    { body: [3, '. 3.1.3 屋面框架节点集中荷载标准值', '. 边  柱', '. 边柱连系梁自重\t0.25×0.6×7.2×25=27 kN', '. 1.1m 高女儿墙自重及抹灰\t1.1×7.2×0.24×18=34 kN', '. 连系梁传来屋面自重\t½×7.2×½×7.2×6.89 kN', '--', '. 顶层边节点集中荷载\tG5A=G5D=186.7 kN', '. 中  柱', '. 连系梁自重\t27.00 kN', '. 连系梁传来屋面自重', '\t½(7.2+7.2−2.1)×2.1/2×6.89=141.66 kN', '--', '. 顶层中节点集中荷载\tG5B=G5C=198.3 kN', '. 3.1.4 楼面框架节点集中荷载标准值', '. 边  柱', '. 墙、窗自重 (7.2×3.6−2×1.8×1.8)×0.24×5.5+0.45=32 kN', '. 连系梁传来楼面自重\t½×7.2×½×7.2×3.8=49 kN', '. 钢窗自重\t2×1.8×0.45 kN', '--', '. 中间层边节点集中荷载\tGA=GD=121 kN', '. 中  柱', '. 连系梁自重\t27.00 kN', '. 内墙自重', '. 7.2×(3.6−0.6)×0.2×5.5+0.34×2=44 kN', '. 扣除门洞重加上门重\t−2.10 kN', '. 连系梁传来楼面自重', '\t½(7.2+7.2−2.1)×2.1/2×3.8=78 kN', '. 框架柱自重\t22.5 kN', '--'] },
    { body: ['. 中间层中节点集中荷载\tGB=GC=176.12 kN', 6, '= 3.2 活荷载计算', '. P5AB=P5CD=2.0×7.2=14.4×(1−2×0.24²+0.24³)=12.96 kN/m', '. P5BC=2.0×2.1×5/8=2.63 kN/m', '. P5A=P5D=½×7.2×3.6×2=25.92 kN', 1, '. P5B=P5C', '. =½(7.2×3.6×2+(7.2+7.2−2.1)×2.1/2×2.0)×½=38.84 kN', 6, '. PAB=PCD=2.5×7.2×(1−2×0.24²+0.24³)=16.2 kN/m', '. PBC=2.5×2.1×5/8=3.28 kN/m', '. PA=PD=½×7.2×3.6×2.5=32.4 kN', '. PB=PC', '. =½(7.2×3.6×2.5+(7.2+7.2−2.1)×2.1/2×2.5)=48.5 kN', '. 活荷载作用计算简图如下'] },
    { indent: 1, body: ['= 3.3 风荷载计算', 1, '. 作用在屋面梁和楼面梁节点处的集中风荷载标准值：', '^ ωk=βz·μs·μz·ω0', 2, '> 基本风压ω0=0.45kN/m²，地面粗糙度为C类，μs=1.3，由于结构高度小于30m，βz=1.0，', '| 迎风面面积A，下表给出各层风荷载标准值与作用高度。', '^ 表 3-1 风荷载计算', table([8, 9, 12, 13, 14, 17, 16, 16], [8, 7, 4, 4, 4, 4], ['层', 'βz', 'μs', 'z(m)', 'μz', 'ω0', 'A', 'Pw']), 9, '. 风荷载作用下的计算简图如图3-2。', 9, fig(76, load()), 2, '^ 图 3-2 风荷载作用下计算简图(kN)'] },
    { body: ['= 3.4 地震作用计算', '. (1) 重力荷载代表值计算', '> 屋面层G5包括：屋面恒载+50%雪荷载+纵横梁自重+半层柱自重+半层墙体自重，其计算如下，',
        '| G5=53.4×18×6.89+0.5×0.35×53.4×18+25×0.25×0.6×7.2×40+0.5×0.5×25×1.8×44+5.5×1.8 kN，',
        '| 其余各层由楼面恒载与50%活载及墙柱重量相加而得，G4=G3=G2，按照相同方法计算，得11456 kN。', 3,
        '. 计算结果：G5=8765 kN，G4=9876 kN，G3=9876 kN，G1=10234 kN', '. ΣG=8765+9876×3+10234=48627 kN', 2, '. 水平地震作用下的计算简图如图3-3。', 2,
        fig(95, path('M67 0V92M53 92h25M65 0h3M65 18h3M65 35h3M65 53h3M65 70h3M57 92v2M61 92v2M65 92v2M69 92v2') + label(72, 2, 'G5=8765') + label(72, 20, 'G4=9876') + label(72, 37, 'G3=9876') + label(72, 55, 'G2=9876') + label(72, 72, 'G1=10234')), 2, '^ 图 3-3 地震作用计算简图'] },
    { body: ['. 3.4.1 横梁线刚度', '> 因为框架梁为现浇楼板，在计算梁线刚度时应考虑楼板作为翼缘的有利影响，边框架梁取',
        '| 惯性矩I=1.5I0，中框架梁取I=2.0I0，其中I0为矩形截面惯性矩，混凝土弹性模量E，采用',
        '| C30时E=3.0×10⁷，横梁线刚度计算结果见表，柱采用C30：E=3.0×10⁷ kN/m²，柱线刚度计算如表3-2所示。', 2, '^ 表 3-2 梁线刚度计算', table([8, 15, 7, 20, 16, 22, 17, 23], [12, 17, 5, 6, 6], ['框', '截面', '跨', 'I0', '边框', '边框i', '中框', '中框i'])] },
    { body: [1, '. 3.4.2 柱抗侧移刚度D值计算', '> 本工程中柱截面尺寸均为500×500，各层柱线刚度相同，底层柱高4.8m，标准层3.6m，',
        '| 框架柱侧移刚度按D值法计算，其中柱侧移刚度修正系数按梁柱线刚度比确定，对于底层计算柱时，见表3-3、表3-4。', '. 梁线刚度K=Σib/2ic', '; D=αc·12ic/h²   α=K/(2+K)', 5, '^ 表 3-3 柱线刚度计算', table([17, 24, 23, 37, 26], [10, 4, 5], ['柱号', '截面', '柱高h', '惯性矩I', '线刚度i']), 1, '^ 表 3-4 框架柱抗侧移刚度D值计算', table([9, 29, 22, 24, 23, 20], [14, 10, 6, 6, 6, 7, 10, 6, 6, 6, 6], ['层', '柱类型', 'K', 'α', 'D', '根数'], [[[1, '层'], [5, '底'], [5, '标']]])] },
    { body: ['^ 表 3-5 横向框架顶点位移计算', table([14, 21, 24, 23, 25, 21], [18, 6, 6, 6, 6, 6], ['层次', 'Gi/kN', 'ΣGi/kN', 'ΣD', '层间位移', 'ui/m']), 10, '. 3.4.3 水平地震作用及楼层剪力计算', '. 采用底部剪力法计算，考虑填充墙影响系数0.7。', '. μT=0.185 m', '结构基本自振周期', 3, '; T1=1.7×0.7×√0.185=0.512 s      αmax=0.08', '. 因为Tg=0.35s，T1<1.4Tg，不考虑顶部附加作用', '. α1=(0.35/0.512)^0.9×0.08=0.0568，结构总水平地震作用', '. FEK=α1·Geq=0.0568×0.85×48627=2348 kN', 2, '. 各质点水平地震作用标准值计算：', 2, '^ Fi=GiHi/ΣGjHj·FEK     (3-5)', 8, '. 各楼层地震剪力标准值与层间位移计算结果见表3-6。'] },
    { body: ['^ 表 3-6 各楼层地震作用及楼层剪力', table([14, 21, 19, 33, 20, 20], [12, 6, 6, 6, 6, 6, 7], ['层次', 'Gi/kN', 'Hi/m', 'GiHi', 'Fi/kN', 'Vi/kN']), 2, '. 3.4.4 多遇地震作用下位移验算', '> 多遇地震作用下，各层间弹性位移应满足规范限值要求，弹性层间位移角限值为1/550，计算如下表。', '. 层间位移角  Δu=V/D，θ=Δu/h  各层计算结果见下表，均满足要求。', 7, '^ 表 3-7 层间位移角验算', table([10, 21, 24, 21, 18, 17, 16], [18, 7, 8, 8, 8, 7], ['层', '层间剪力', '层间刚度', 'Δu', '层高', 'θ', '限值'])] },
    { body: ['. 3.4.5 水平地震作用下框架内力分析', '> 采用D值法计算框架内力，求得各柱剪力与反弯点高度后，根据节点平衡条件求得',
        '| 梁端弯矩，计算结果弯矩图如下，轴力与剪力由静力平衡条件求得，剪力及轴力图见后页，如图3-4。', 8, fig(115, sway([31, 68, 85, 121], [6, 27, 48, 69, 90], 112)), 2, '^ 图 3-4 水平地震作用下框架弯矩图(kN·m)'] },
    { body: [3, fig(118, steps([0, 23, 46, 68, 92, 115], [[39, 134], [37, 137], [35, 140], [32, 142], [29, 144]], [[78, 96], [77, 97], [74, 101], [71, 105], [68, 107]], [79, 94])), 16, '^ 图 3-5 水平地震作用下剪力、轴力图(kN)'] },

    { body: ['= 第四章 框架内力计算', '= 4.1 恒载作用下框架内力', '> 恒载作用下框架内力采用弯矩二次分配法计算，因结构对称取半边结构，计算前先求梁端弯矩，计算过程如下列所示。', '. 顶层：          g=(1−2α²+α³)·g\t(4-1)', '. 中间层：          g=5/8·g\t(4-2)', '. 其中α为梯形荷载系数，均布荷载见图，计算如下。', 2, '. α=a/l=3.6/7.5=0.24，顶层均布荷载0.24，等效荷载24.8，代入', 6, '等效荷载如下：', 9, '. g5AB=2.84+24.8×(1−2×0.24²+0.24³)=24.8 kN/m', 11, '. g5BC=1.84+5/8×14.47=10.9 kN/m', 2, '. 标准层等效荷载：', 2, '. gAB=8.64+27.4×(1−2×0.24²+0.24³)=32.9 kN/m', 7, '. gBC=1.84+5/8×7.98=6.83 kN/m'] },
    { body: [4, fig(162, loads()), '^ 图 4-1 等效均布荷载转化', '. 利用力矩分配法计算杆端弯矩，分配系数如下表。', '. (1) 顶层分配系数。'] },
    { body: [1, '. (1) 计算梁端弯矩分配系数。', '. (2) 弯矩分配过程见图。', fig(57, spread(37, 97, 22, 129, 2, 8, 52)), 1, '^ 图 4-2 顶层弯矩分配', fig(71, spread(42, 98, 28, 129, 2, 27, 64)), 1, '^ 图 4-3 标准层弯矩分配'] },
    { body: [3, fig(72, spread(42, 94, 25, 125, 0, 32, 67)), 1, '^ 图 4-4 底层弯矩分配', '> 按照上述分配结果，叠加得各杆端最终弯矩，并根据静力平衡求得各梁跨中弯矩，绘制恒载作用下弯矩图、剪力图与轴力图，如下图所示。'] },
    { body: [4, fig(128, sag([35, 81, 94, 141], [14, 34, 54, 74, 95], 117)), '^ 图 4-5 恒载作用下弯矩图(kN·m)'] },
    { body: [4, fig(109, shear(34, 71, 81, 117, [9, 29, 48, 67, 87], 108)), 1, '^ 图 4-6 恒载作用下剪力、轴力图(kN)'] },
    { body: ['= 4.2 活载作用下内力计算', '. 活荷载作用下内力计算方法同恒载，按照等效均布荷载求得。', 7, fig(106, roofLoads()), '^ 活载布置简图'] },
    { body: ['各节点分配系数', 5, table([17, 17, 17, 17, 17, 17, 17], [6, 6, 7, 6], ['层次', 'M上', 'M下', 'M左', 'M右', 'M中', 'M底']), 4, '梁端剪力计算(单位：kN)', 6, table([29, 30, 30, 30], [6, 5, 6, 5], ['层次', 'AB跨', 'BC跨', 'CD跨']), 5, '跨中弯矩计算(单位：kN)', 1, table([17, 17, 17, 17, 17, 17, 17], [5, 6, 6, 6, 5], ['层次', '5AB', '5BC', '5CD', '2AB', '2BC', '2CD']), '柱轴力计算(单位：kN)', 5, table([19, 20, 20, 20, 20], [6, 7, 6, 6, 6, 5], ['层次', 'A', 'B', 'C', 'D'])] },
    { body: ['跨中弯矩值', 5, table([19, 25, 25, 25, 25], [6, 6, 6, 6, 6, 6], ['层次', 'A', 'B', 'C', 'D'])] },
    { wide: 1, body: [`<svg viewBox="0 0 222 120" width="222" height="120">${joints(0)}${joints(28)}${joints(56)}${joints(84)}</svg>`] },

    { wide: 1, body: [`<svg viewBox="0 0 222 40" width="222" height="40">${joints(0)}</svg>`] },
    { body: [4, fig(133, sag([36, 79, 90, 133], [14, 35, 57, 78, 100], 122)), '^ 图 4-8 活载作用下弯矩图(kN·m)'] },
    { body: [5, fig(115, shear(30, 69, 79, 118, [9, 30, 51, 71, 92], 114)), 10, '^ 图 4-9 活载作用下剪力、轴力图(kN)'] },
    { body: ['= 4.3 风荷载作用下内力计算', '. 根据D值法求得各柱剪力和反弯点高度，计算结果见表4-5。', '. 风荷载作用下框架弯矩、剪力、轴力图见图4-10、4-11。', 6, '^ 表 4-5 风荷载作用下反弯点', table([4, 9, 10, 9, 10, 10, 10, 10, 10, 10, 10], [6, 6, 6, 6, 6, 6, 6], ['', '边', '柱', 'D', 'V', 'y', '中', '柱', 'D', 'V', 'y']), 9, fig(100, sway([38, 71, 83, 116], [7, 26, 42, 60, 77], 96)), '^ 图 4-10 风荷载作用下弯矩图(kN·m)'] },
    { body: [14, fig(86, steps([0, 17, 33, 50, 67, 84], [[36, 123], [33, 125], [31, 129], [29, 131], [26, 132]], [[71, 89], [70, 90], [66, 93], [65, 94], [62, 97]], [72, 87])), 3, '^ 图 4-11 风荷载作用下剪力、轴力图(kN)'] },
    { body: [4, '# 第 5 章  内力组合', 5, '= 5.1 梁内力组合', '. 梁内力组合见表5-1，根据《规范》规定5.2 进行。', '^ 表 5-1 梁内力组合', table([9, 10, 16, 19, 18, 18, 19, 17], [13, 4, ...rep(24, 4)], ['', '', 'Mmax', '相应V', 'Mmin', '相应V', 'Vmax', '相应M'],
        [[[2, ''], [5, 'A'], [5, 'B左'], [5, 'B右'], [5, '跨'], [4, '中']]])] },
    { body: ['= 5.2 柱内力组合', 5, '^ 依据规范要求对框架柱进行内力组合，考虑Mmax、Nmax、Nmin三种情况。', 5, '^ 表 5-2 A柱内力组合', table([6, 9, 11, 10, 10, 10, 11, 9, 14, 13, 17], [9, 4, ...rep(11, 4)], ['', '', 'Mmax', 'N', 'V', '', 'Nmin', 'V', 'Nmax', 'M', 'V']), 11, '^ 表 5-3 B柱内力组合', table([6, 9, 11, 10, 10, 10, 11, 9, 14, 13, 17], [9, 4, ...rep(11, 4)], ['', '', 'Mmax', 'N', 'V', '', 'Nmin', 'V', 'Nmax', 'M', 'V'])] },
    { body: [5, '^ 表 5-4 框架梁柱剪力与轴力组合', table([5, 14, 10, 11, 10, 11, 10, 11, 10, 11, 10, 11], [6, 6, 9, 5, 6, 5], ['', '截面', '5层', '', '4层', '', '3层', '', '2层', '', '1层', '']), fig(5, path('M13 0v5', 'bold'))] },
    { wide: 1, body: ['横向框架梁内力组合表：', table(wideCols, [5, 7, 5, ...rep(22, 4)], wideHead, [[[3, '杆件'], [10, '顶层横梁'], [10, '三层横梁'], [2, '二层横梁']], [[3, '截面'], [5, 'A支座'], [5, 'B支座'], [5, 'A支座'], [5, 'B支座'], [2, 'A支座']]])] },
    { wide: 1, body: [table(wideCols, rep(18, 4), [], [[[8, ''], [10, '一层横梁']], [[3, ''], [5, 'B支座'], [5, 'A支座'], [5, 'B支座']]])] },

    { wide: 1, body: ['横向框架梁内力组合表：', table([19, 17, 18, 13, 16, 20, 47, 40], rep(3, 12), ['楼层', '截面', '内力', '恒', '活', '地震', '荷载组合', '1.2恒+1.4活'])] },
    { wide: 1, body: [table([20, 18, 18, 7, 16, 19, 21, 21, 20, 20], rep(12, 5))] },
    { wide: 1, body: ['横向框架柱内力组合表：', table([12, 9, 8, 9, 20, 48, 26, 26, 14, 14, 14], rep(3, 12), ['层', '柱', '截', '内', '荷载', '内力组合', '恒', '活', 'Mmax', 'Nmax', 'Nmin'])] },
    { wide: 1, body: [table([11, 9, 9, 9, 10, 10, 10, 11, 14, 12, 25, 15, 15, 15, 15], [11, 9, 9, 9, 9])] },
    { wide: 1, body: [table([11, 10, 8, 9, 9, 10, 11, 10, 11, 10, 13, 11, 25, 14, 15, 15], [8])] },
    { wide: 1, body: [table([13, 15, 15, 11, 13, 17, 18, 16, 18, 17, 15, 16], rep(12, 4))] },
    { wide: 1, body: [5, '= 6  框架梁柱内力组合与调整', '. 6.1 内力调整与换算'] },
    { wide: 1, body: [6, table([14, 60, 57, 60], rep(12, 4), ['层次', 'AB跨', 'BC跨', 'CD跨'])] }
];

document.getElementById('pages').innerHTML = pages.map((p, i) => {
    const cls = ['page', p.wide ? 'wide' : '', p.front ? 'front' : '', p.indent ? 'indent' : ''].join(' ').trim();
    const body = join(p.body).map(b => {
        if (typeof b === 'number') return `<div style="height:${b}px"></div>`;
        return b[0] === '<' ? b : line(b);
    }).join('');
    const no = i > 4 ? i - 4 : '';
    return `<article class="${cls}"><div class="top"></div><div class="body">${body}</div><div class="foot">${no}</div></article>`;
}).join('');
```
